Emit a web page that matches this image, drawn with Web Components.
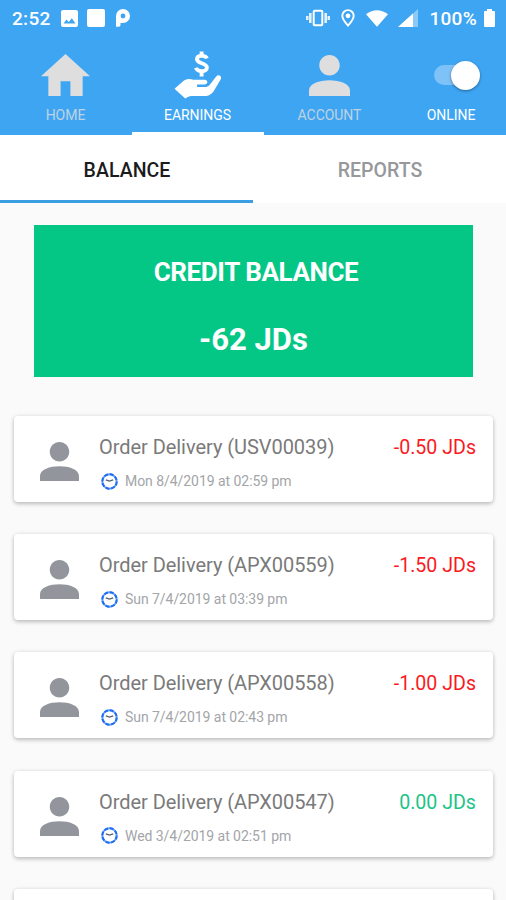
<!DOCTYPE html>
<html lang="en">
<head>
<meta charset="utf-8">
<meta name="viewport" content="width=device-width, initial-scale=1">
<title>Earnings</title>
<style>
    body {
        margin: 0;
        height: 900px;
        overflow: hidden;
        background: #fafafa;
        font-family: Roboto, sans-serif;
    }
</style>
</head>
<body>
<earnings-page></earnings-page>

<script>
const PERSON = `<path d="M12 12c2.200 0 4-1.800 4-4s-1.800-4-4-4-4 1.800-4 4 1.800 4 4 4zm0 1.900c-4 0-8 1.300-8 4V20h16v-2.100c0-2.700-4-4-8-4z"/>`

class StatusBar extends HTMLElement {
    constructor() {
        super()
        this.attachShadow({ mode: 'open' })
    }

    connectedCallback() {
        this.shadowRoot.innerHTML = `
        <style>
            :host {
                display: flex;
                align-items: center;
                box-sizing: border-box;
                height: 36px;
                padding: 0 11px 0 12px;
                color: white;
                font-size: 19px;
                font-weight: 500;
                letter-spacing: .3px;
            }
            svg {
                display: block;
                fill: currentColor;
            }
            .time {
                width: 49px;
            }
            .left {
                display: flex;
                align-items: center;
                gap: 9px;
                flex: 1;
            }
            .right {
                display: flex;
                align-items: center;
            }
        </style>
        <span class="time">2:52</span>
        <div class="left">
            <svg width="17" height="17" viewBox="0 0 17 17"><path fill-rule="evenodd" d="M2 0h13q2 0 2 2v13q0 2-2 2H2q-2 0-2-2V2q0-2 2-2zM2.500 13.500h12L10.800 8.300 7.800 12 5.500 9.600z"/></svg>
            <svg width="18" height="18" viewBox="0 0 18 18"><rect width="18" height="18" rx="2"/></svg>
            <svg style="margin-left:2px" width="14" height="18" viewBox="0 0 14 18"><path fill-rule="evenodd" d="M0 17.800V7a7 7 0 1 1 7 7H4.500v2q0 1.800-1.800 1.800zM7 4.600a2.400 2.400 0 1 0 0 4.800 2.400 2.400 0 0 0 0-4.800z"/></svg>
        </div>
        <div class="right">
            <svg width="24" height="18" viewBox="0 0 24 18"><rect x="7.700" y="1.800" width="8.600" height="14.400" rx="1" fill="none" stroke="white" stroke-width="2"/><path d="M3 4H5.600v10H3zM18.400 4H21v10h-2.600zM0 7h2.500v4H0zM21.500 7H24v4h-2.500z" opacity=".85"/></svg>
            <svg style="margin-left:11px" width="14" height="18" viewBox="0 0 14 18"><path d="M7 1.100a5.700 5.700 0 0 0-5.700 5.700C1.300 10.500 7 16.600 7 16.600s5.700-6.100 5.700-9.800A5.700 5.700 0 0 0 7 1.100z" fill="none" stroke="white" stroke-width="1.900"/><circle cx="7" cy="6.800" r="2.400"/></svg>
            <svg style="margin-left:11px" width="22" height="17" viewBox="0 0 23 17"><path d="M0 4Q11.500-4 23 4L11.500 17z"/></svg>
            <svg style="margin-left:10px" width="20" height="18" viewBox="0 0 20 18"><path d="M20 0v18H0z" opacity=".4"/><path d="M15 4.500V18H0z"/></svg>
            <span style="margin-left:11px">100%</span>
            <svg style="margin-left:7px" width="11" height="18" viewBox="0 0 11 18"><path d="M3 0h5v2h2q1 0 1 1v14q0 1-1 1H1q-1 0-1-1V3q0-1 1-1h2z"/></svg>
        </div>
        `
    }
}

// One entry of the top bar: icon in the slot, label below it
class NavItem extends HTMLElement {
    constructor() {
        super()
        this.attachShadow({ mode: 'open' })
    }

    connectedCallback() {
        this.shadowRoot.innerHTML = `
        <style>
            :host {
                display: flex;
                flex-direction: column;
                align-items: center;
                box-sizing: border-box;
                height: 99px;
                padding: 14px 1px 0 0;
                border-bottom: 3px solid transparent;
                color: #dedede;
            }
            :host([active]) {
                color: white;
                border-bottom-color: white;
            }
            :host([on]) {
                padding-right: 0;
                color: white;
            }
            .icon {
                display: flex;
                align-items: center;
                justify-content: center;
                height: 50px;
            }
            .label {
                margin-top: 7px;
                font-size: 14px;
                line-height: 16px;
                letter-spacing: -.05px;
                opacity: .8;
            }
            :host([active]) .label, :host([on]) .label {
                opacity: 1;
            }
        </style>
        <div class="icon"><slot></slot></div>
        <div class="label">${this.getAttribute('label')}</div>
        `
    }
}

class OnlineSwitch extends HTMLElement {
    constructor() {
        super()
        this.attachShadow({ mode: 'open' })
    }

    connectedCallback() {
        this.shadowRoot.innerHTML = `
        <style>
            :host {
                display: flex;
                align-items: center;
                justify-content: flex-end;
                width: 40px;
                height: 20px;
                margin: 0 0 0 5px;
                border-radius: 10px;
                background: #7fc2f8;
            }
            .thumb {
                flex: none;
                width: 29px;
                height: 29px;
                margin-right: -6px;
                border-radius: 50%;
                background: white;
                box-shadow: 0 1px 3px rgba(0, 0, 0, .4);
            }
        </style>
        <div class="thumb"></div>
        `
    }
}

class SubTab extends HTMLElement {
    constructor() {
        super()
        this.attachShadow({ mode: 'open' })
    }

    connectedCallback() {
        this.shadowRoot.innerHTML = `
        <style>
            :host {
                display: flex;
                flex: 1;
                align-items: center;
                justify-content: center;
                box-sizing: border-box;
                height: 68px;
                padding: 5px 0 0 1px;
                border-bottom: 3px solid white;
                color: #96989a;
                background: white;
                font-size: 19.500px;
                font-weight: 500;
                letter-spacing: .05px;
            }
            :host([active]) {
                color: #1b1b1b;
                border-bottom-color: #3a9fe2;
            }
        </style>
        <slot></slot>
        `
    }
}

class CreditBalance extends HTMLElement {
    constructor() {
        super()
        this.attachShadow({ mode: 'open' })
    }

    connectedCallback() {
        this.shadowRoot.innerHTML = `
        <style>
            :host {
                display: flex;
                flex-direction: column;
                align-items: center;
                box-sizing: border-box;
                height: 152px;
                margin: 22px 33px 0 34px;
                padding-top: 32px;
                background: #04c786;
                color: white;
                font-weight: 700;
            }
            .title {
                padding-left: 5px;
                font-size: 26px;
                line-height: 30px;
                letter-spacing: -.4px;
            }
            .amount {
                margin-top: 34px;
                font-size: 31px;
                line-height: 38px;
            }
        </style>
        <div class="title">CREDIT BALANCE</div>
        <div class="amount"><slot></slot></div>
        `
    }
}

class OrderCard extends HTMLElement {
    constructor() {
        super()
        this.attachShadow({ mode: 'open' })
    }

    render() {
        const amount = this.getAttribute('amount')
        const color = amount.startsWith('-') ? '#fa1a22' : '#1cc488'
        this.shadowRoot.innerHTML = `
        <style>
            :host {
                display: flex;
                flex: none;
                box-sizing: border-box;
                height: 86px;
                padding: 0 17px 0 26px;
                border-radius: 4px;
                background: white;
                box-shadow: 0 2px 4px rgba(0, 0, 0, .22), 0 0 4px rgba(0, 0, 0, .08);
                white-space: nowrap;
            }
            .person {
                flex: none;
                margin: 26px 20px 0 0;
                fill: #92969c;
            }
            .info {
                flex: 1;
                padding-top: 19px;
            }
            .order {
                font-size: 20px;
                line-height: 24px;
                letter-spacing: -.05px;
                color: #7a7a7a;
            }
            .date {
                display: flex;
                align-items: center;
                gap: 7px;
                margin: 13px 0 0 2px;
                font-size: 14px;
                line-height: 18px;
                letter-spacing: -.05px;
                color: #a3a5a9;
            }
            .amount {
                padding-top: 20px;
                font-size: 19.600px;
                line-height: 24px;
                color: ${color};
            }
        </style>
        <svg class="person" width="39" height="39" viewBox="4 4 16 16">${PERSON}</svg>
        <div class="info">
            <div class="order">${this.getAttribute('order')}</div>
            <div class="date">
                <svg width="17" height="17" viewBox="0 0 17 17" fill="none"><circle cx="8.500" cy="8.500" r="7.200" stroke="#6ba1fb" stroke-width="2"/><circle cx="8.500" cy="8.500" r="7.200" stroke="#1f6df0" stroke-width="2" stroke-dasharray="3.900 1.755"/><path d="M4.800 6.800l3.700 1.300 3.700-1.300" stroke="#53606c" stroke-width="1.300"/></svg>
                <span>${this.getAttribute('date')}</span>
            </div>
        </div>
        <div class="amount">${amount}</div>
        `
    }

    connectedCallback() {
        this.render()
    }
}

const pageTemplate = document.createElement('template')
pageTemplate.innerHTML = `
<style>
    :host {
        display: block;
        height: 900px;
        overflow: hidden;
    }
    header {
        background: #3ea5f3;
    }
    nav {
        display: grid;
        grid-template-columns: 132px 132px 132px 1fr;
    }
    nav svg {
        display: block;
        fill: #dedede;
    }
    .subtabs {
        display: flex;
    }
    .list {
        display: flex;
        flex-direction: column;
        gap: 32.200px;
        margin: 39px 13px 0 14px;
    }
</style>
<header>
    <status-bar></status-bar>
    <nav>
        <nav-item label="HOME">
            <svg width="49" height="42" viewBox="2 3 20 17" preserveAspectRatio="none"><path d="M10 20v-6h4v6h5v-8h3L12 3 2 12h3v8z"/></svg>
        </nav-item>
        <nav-item label="EARNINGS" active>
            <svg width="48" height="48" viewBox="174 51 48 48">
                <path fill="none" stroke="white" stroke-width="3.900" d="M206.800 58.500C206 55.300 197 54.500 197 59.300c0 4.700 9.900 3.200 9.900 8.300 0 5-9.700 4.500-10.900.2M201.600 51.500v4M201.600 71.500v5"/>
                <path fill="white" d="M174.500 88.800l9.500-8.300q3-2.200 7-1.200l2.500.5H204.500q3.300.3 2.700 3-.5 1.600-2.600 1.700h-7.500v2.400h8.900q2.400-.2 4-2.300l6-7.800q1.500-1.900 3.500-1.300 2.200.9 1.500 3.200l-6.300 10.800q-2.700 5.500-8.200 6.400h-15.500q-2.500.2-5.800 2.700z"/>
            </svg>
        </nav-item>
        <nav-item label="ACCOUNT">
            <svg width="41" height="41" viewBox="4 4 16 16">${PERSON}</svg>
        </nav-item>
        <nav-item label="ONLINE" on>
            <online-switch></online-switch>
        </nav-item>
    </nav>
</header>
<div class="subtabs">
    <sub-tab active>BALANCE</sub-tab>
    <sub-tab>REPORTS</sub-tab>
</div>
<credit-balance>-62 JDs</credit-balance>
<div class="list">
    <order-card order="Order Delivery (USV00039)" date="Mon 8/4/2019 at 02:59 pm" amount="-0.50 JDs"></order-card>
    <order-card order="Order Delivery (APX00559)" date="Sun 7/4/2019 at 03:39 pm" amount="-1.50 JDs"></order-card>
    <order-card order="Order Delivery (APX00558)" date="Sun 7/4/2019 at 02:43 pm" amount="-1.00 JDs"></order-card>
    <order-card order="Order Delivery (APX00547)" date="Wed 3/4/2019 at 02:51 pm" amount="0.00 JDs"></order-card>
    <order-card order="" date="" amount=""></order-card>
</div>
`

class EarningsPage extends HTMLElement {
    constructor() {
        super()
        this.attachShadow({ mode: 'open' })
        this.shadowRoot.appendChild(pageTemplate.content.cloneNode(true))
    }
}

window.customElements.define('status-bar', StatusBar)
window.customElements.define('nav-item', NavItem)
window.customElements.define('online-switch', OnlineSwitch)
window.customElements.define('sub-tab', SubTab)
window.customElements.define('credit-balance', CreditBalance)
window.customElements.define('order-card', OrderCard)
window.customElements.define('earnings-page', EarningsPage)
</script>
</body>
</html>
